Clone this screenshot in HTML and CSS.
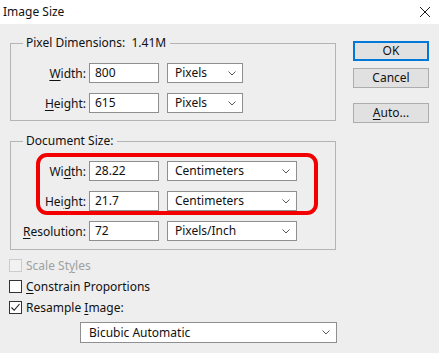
FILE: index.html
```html
<!DOCTYPE html>
<html lang="en">

<head>
    <meta charset="UTF-8">
    <title>Image Size</title>
    <link rel="stylesheet" href="styles.css">
</head>

<body>
    <div class="titlebar">
        <span class="title">Image Size</span>
        <svg class="close" width="12" height="12" viewBox="0 0 12 12" fill="none" stroke="#1a1a1a" stroke-width="1">
            <path d="M1 1 L11 11 M11 1 L1 11" />
        </svg>
    </div>

    <div class="main">
        <div class="left">
            <fieldset class="group group-pixels">
                <legend>Pixel Dimensions:&nbsp; 1.41M</legend>
                <div class="rows">
                    <span class="lbl"><u>W</u>idth:</span>
                    <div class="field">800</div>
                    <div class="select unit-sm"><span>Pixels</span>
                        <svg class="chev" width="8" height="5" viewBox="0 0 8 5"><path d="M0.5 0.5 L4 4 L7.5 0.5" /></svg>
                    </div>

                    <span class="lbl"><u>H</u>eight:</span>
                    <div class="field">615</div>
                    <div class="select unit-sm"><span>Pixels</span>
                        <svg class="chev" width="8" height="5" viewBox="0 0 8 5"><path d="M0.5 0.5 L4 4 L7.5 0.5" /></svg>
                    </div>
                </div>
            </fieldset>

            <fieldset class="group group-doc">
                <legend>Document Size:</legend>
                <div class="rows">
                    <div class="mark"></div>

                    <span class="lbl">Wi<u>d</u>th:</span>
                    <div class="field">28.22</div>
                    <div class="select unit-lg"><span>Centimeters</span>
                        <svg class="chev" width="8" height="5" viewBox="0 0 8 5"><path d="M0.5 0.5 L4 4 L7.5 0.5" /></svg>
                    </div>

                    <span class="lbl">Hei<u>g</u>ht:</span>
                    <div class="field">21.7</div>
                    <div class="select unit-lg"><span>Centimeters</span>
                        <svg class="chev" width="8" height="5" viewBox="0 0 8 5"><path d="M0.5 0.5 L4 4 L7.5 0.5" /></svg>
                    </div>

                    <span class="lbl"><u>R</u>esolution:</span>
                    <div class="field">72</div>
                    <div class="select unit-lg"><span>Pixels/Inch</span>
                        <svg class="chev" width="8" height="5" viewBox="0 0 8 5"><path d="M0.5 0.5 L4 4 L7.5 0.5" /></svg>
                    </div>
                </div>
            </fieldset>

            <div class="checks">
                <div class="check disabled"><span class="box"></span><span>Scale St<u>y</u>les</span></div>
                <div class="check"><span class="box"></span><span><u>C</u>onstrain Proportions</span></div>
                <div class="check"><span class="box">
                        <svg width="11" height="11" viewBox="0 0 11 11" fill="none" stroke="#1a1a1a" stroke-width="1.1">
                            <path d="M1.5 5.5 L4.2 8.3 L9.5 2" />
                        </svg>
                    </span><span>Resample <u>I</u>mage:</span></div>
            </div>

            <div class="select method"><span>Bicubic Automatic</span>
                <svg class="chev" width="8" height="5" viewBox="0 0 8 5"><path d="M0.5 0.5 L4 4 L7.5 0.5" /></svg>
            </div>
        </div>

        <div class="buttons">
            <button class="btn default">OK</button>
            <button class="btn">Cancel</button>
            <button class="btn auto"><u>A</u>uto...</button>
        </div>
    </div>
</body>

</html>
```

FILE: styles.css
```css
* {
    margin: 0;
    padding: 0;
    box-sizing: border-box;
}

body {
    font-family: "Noto Sans", "Liberation Sans", sans-serif;
    font-size: 12px;
    color: #111;
    background: #eeeeee;
    width: 439px;
    height: 353px;
    overflow: hidden;
}

u {
    text-decoration: underline;
    text-underline-offset: 2px;
}

.titlebar {
    height: 24px;
    background: #ffffff;
    display: flex;
    align-items: center;
    justify-content: space-between;
    padding: 0 8px 0 3px;
}

.title {
    line-height: 16px;
}

.main {
    display: flex;
    gap: 17px;
    padding: 0 10px;
}

.left {
    width: 326px;
    padding-top: 11px;
}

/* group boxes */
.group {
    border: 1px solid #b4b4b4;
    padding: 12px 0 7px;
    min-width: 0;
}

.group legend {
    margin-left: 12px;
    padding: 0 4px 0 3px;
    line-height: 16px;
}

.group-doc {
    margin-top: 12px;
    padding-bottom: 8px;
}

.rows {
    position: relative;
    display: grid;
    grid-template-columns: 75px 70px auto;
    grid-auto-rows: 20px;
    column-gap: 3px;
    row-gap: 10px;
    align-items: center;
}

.lbl {
    text-align: right;
    white-space: nowrap;
}

.field {
    height: 20px;
    background: #ffffff;
    border: 1px solid #8f8f8f;
    padding-left: 5px;
    line-height: 18px;
}

.select {
    height: 20px;
    background: #ffffff;
    border: 1px solid #8f8f8f;
    padding-left: 7px;
    line-height: 18px;
    display: flex;
    align-items: center;
    justify-content: space-between;
    padding-right: 6px;
}

.chev {
    fill: none;
    stroke: #5a5a5a;
    stroke-width: 1;
}

.unit-sm {
    width: 76px;
    margin-left: 5px;
}

.unit-lg {
    width: 130px;
    margin-left: 5px;
}

/* red annotation ring */
.mark {
    position: absolute;
    left: 25px;
    top: -8px;
    width: 282px;
    height: 62px;
    border: 4px solid #f20000;
    border-radius: 11px;
    pointer-events: none;
}

/* checkboxes */
.checks {
    margin-top: 5px;
    margin-left: -1px;
}

.check {
    display: flex;
    align-items: center;
    height: 21px;
    gap: 4px;
}

.box {
    width: 13px;
    height: 13px;
    border: 1px solid #333;
    background: #ffffff;
    display: flex;
    align-items: center;
    justify-content: center;
}

.check.disabled {
    color: #a0a0a0;
}

.check.disabled .box {
    border-color: #cccccc;
    background: #f2f2f2;
}

.method {
    width: 257px;
    height: 21px;
    margin: 4px 0 0 70px;
    line-height: 19px;
    padding-left: 8px;
}

/* dialog buttons */
.buttons {
    width: 76px;
    padding-top: 17px;
    display: flex;
    flex-direction: column;
}

.btn {
    height: 20px;
    font: inherit;
    color: #111;
    background: #e1e1e1;
    border: 1px solid #adadad;
    line-height: 16px;
}

.btn.default {
    border: 2px solid #0078d7;
}

.btn + .btn {
    margin-top: 7px;
}

.btn.auto {
    margin-top: 15px;
}
```
